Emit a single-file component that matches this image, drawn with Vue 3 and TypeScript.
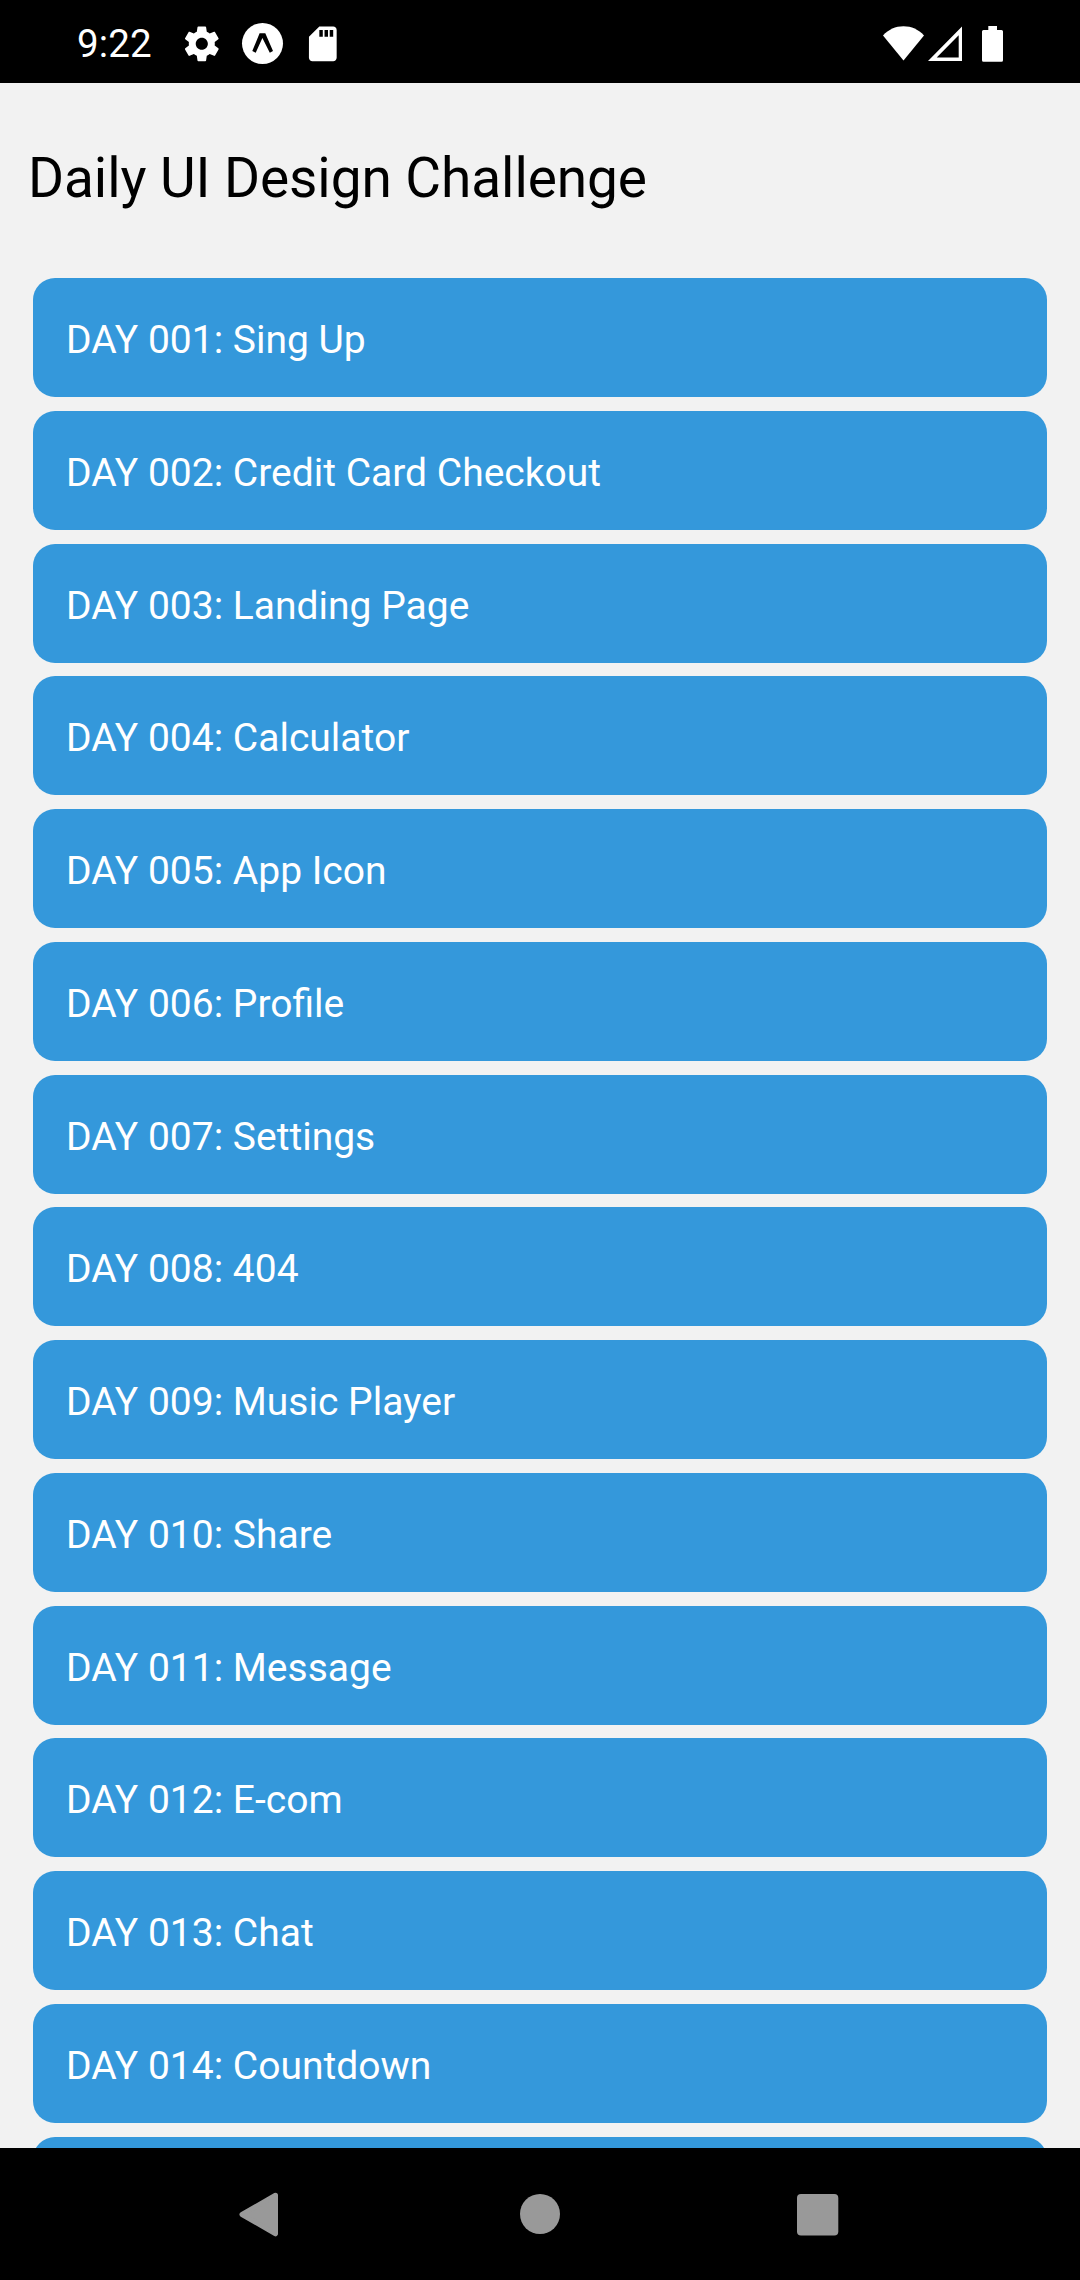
<script setup lang="ts">
const challenges: string[] = [
  'Sing Up',
  'Credit Card Checkout',
  'Landing Page',
  'Calculator',
  'App Icon',
  'Profile',
  'Settings',
  '404',
  'Music Player',
  'Share',
  'Message',
  'E-com',
  'Chat',
  'Countdown',
  '',
]

const dayLabel = (index: number): string => `DAY ${String(index + 1).padStart(3, '0')}: `
</script>

<template>
  <div class="screen">
    <header class="status">
      <div class="group">
        <span class="time">9:22</span>
        <svg class="gear" width="41.6" height="41.6" viewBox="0 0 24 24" fill="#fff">
          <path d="M19.43 12.98c.04-.32.07-.64.07-.98s-.03-.66-.07-.98l2.11-1.65c.19-.15.24-.42.12-.64l-2-3.46c-.12-.22-.39-.3-.61-.22l-2.49 1c-.52-.4-1.08-.73-1.69-.98l-.38-2.65C14.46 2.18 14.25 2 14 2h-4c-.25 0-.46.18-.49.42l-.38 2.65c-.61.25-1.17.59-1.69.98l-2.49-1c-.23-.09-.49 0-.61.22l-2 3.46c-.13.22-.07.49.12.64l2.11 1.65c-.04.32-.07.65-.07.98s.03.66.07.98l-2.11 1.65c-.19.15-.24.42-.12.64l2 3.46c.12.22.39.3.61.22l2.49-1c.52.4 1.08.73 1.69.98l.38 2.65c.03.24.24.42.49.42h4c.25 0 .46-.18.49-.42l.38-2.65c.61-.25 1.17-.59 1.69-.98l2.49 1c.23.09.49 0 .61-.22l2-3.46c.12-.22.07-.49-.12-.64l-2.11-1.65zM12 15.5c-1.93 0-3.5-1.57-3.5-3.5s1.57-3.5 3.5-3.5 3.5 1.57 3.5 3.5-1.57 3.5-3.5 3.5z" />
        </svg>
        <svg class="expo" width="41" height="41" viewBox="0 0 41 41">
          <circle cx="20.5" cy="20.5" r="20.5" fill="#fff" />
          <path d="M17.6 10.3h5.700L31 28l-3.200 1.800L20.400 15 13.700 29.800 10.300 28z" fill="#000" />
        </svg>
        <svg class="sd" width="41.6" height="41.6" viewBox="0 0 24 24" fill="#fff">
          <path d="M18 2h-8L4.02 8 4 20c0 1.1.9 2 2 2h12c1.1 0 2-.9 2-2V4c0-1.1-.9-2-2-2zm-6 6h-2V4h2v4zm3 0h-2V4h2v4zm3 0h-2V4h2v4z" />
        </svg>
      </div>
      <div class="group">
        <svg width="41" height="36" viewBox="0 0 41 36" fill="#fff">
          <path d="M0 9.5C5.5 3.5 12.5.3 20.5.3S35.5 3.500 41 9.500L20.500 34.500z" />
        </svg>
        <svg class="signal" width="35" height="36" viewBox="0 0 35 36">
          <path d="M0 35L34 .6V35zM8.700 31.500H30.700V9.300z" fill="#fff" fill-rule="evenodd" />
        </svg>
        <svg class="battery" width="21" height="36" viewBox="0 0 21 36" fill="#fff">
          <path d="M6.300 0h8.700v4h4.500q1.500 0 1.500 1.500v28.700q0 1.500-1.500 1.500h-18q-1.500 0-1.500-1.500V5.500Q0 4 1.500 4h4.800z" />
        </svg>
      </div>
    </header>

    <main class="content">
      <h1 class="title">Daily UI Design Challenge</h1>
      <ul class="list">
        <li v-for="(name, index) in challenges" :key="index" class="card">
          <template v-if="name">{{ dayLabel(index) }}{{ name }}</template>
        </li>
      </ul>
    </main>

    <nav class="nav">
      <svg width="44" height="46" viewBox="0 0 44 46">
        <path d="M36.500 4.200L3 23.500 36.500 42.800z" fill="#999" stroke="#999" stroke-width="5" stroke-linejoin="round" />
      </svg>
      <svg width="40" height="40" viewBox="0 0 40 40">
        <circle cx="20" cy="20" r="20" fill="#999" />
      </svg>
      <svg width="42" height="40" viewBox="0 0 42 40">
        <rect width="41.300" height="41.600" rx="4" fill="#999" />
      </svg>
    </nav>
  </div>
</template>

<style>
body {
  background: #000;
}
</style>

<style scoped>
.screen {
  display: flex;
  flex-direction: column;
  width: 1080px;
  height: 2280px;
  overflow: hidden;
  background: #f2f2f2;
  font-family: Roboto, sans-serif;
}

.screen svg {
  display: block;
  flex: none;
  overflow: visible;
}

.status {
  display: flex;
  flex: none;
  justify-content: space-between;
  height: 83px;
  padding: 0 77px;
  box-sizing: border-box;
  background: #000;
  color: #fff;
}

.group {
  display: flex;
  align-items: center;
  padding-top: 4px;
}

.time {
  width: 76px;
  font-size: 38.5px;
  line-height: 46px;
  letter-spacing: 0.1px;
  white-space: nowrap;
}

.gear {
  margin-left: 27.5px;
}

.expo {
  margin-left: 19.9px;
}

.sd {
  margin-left: 19.4px;
}

.signal {
  margin-left: 4px;
}

.battery {
  margin-left: 19px;
}

.content {
  flex: 1;
  min-height: 0;
  overflow: hidden;
}

.title {
  margin: 0;
  padding: 63px 28px 68px;
  font-size: 55px;
  font-weight: 400;
  line-height: 64px;
  letter-spacing: -0.08px;
  color: #000;
}

.list {
  display: flex;
  flex-direction: column;
  gap: 13.77px;
  margin: 0;
  padding: 0 33px;
  list-style: none;
}

.card {
  flex: none;
  height: 119px;
  padding: 39px 33px 0;
  box-sizing: border-box;
  border-radius: 22px;
  background: #3498db;
  color: #fff;
  font-size: 39px;
  line-height: 46px;
}

.nav {
  display: flex;
  flex: none;
  align-items: center;
  justify-content: space-between;
  height: 132px;
  padding: 0 241px 0 239px;
  box-sizing: border-box;
  background: #000;
}
</style>
